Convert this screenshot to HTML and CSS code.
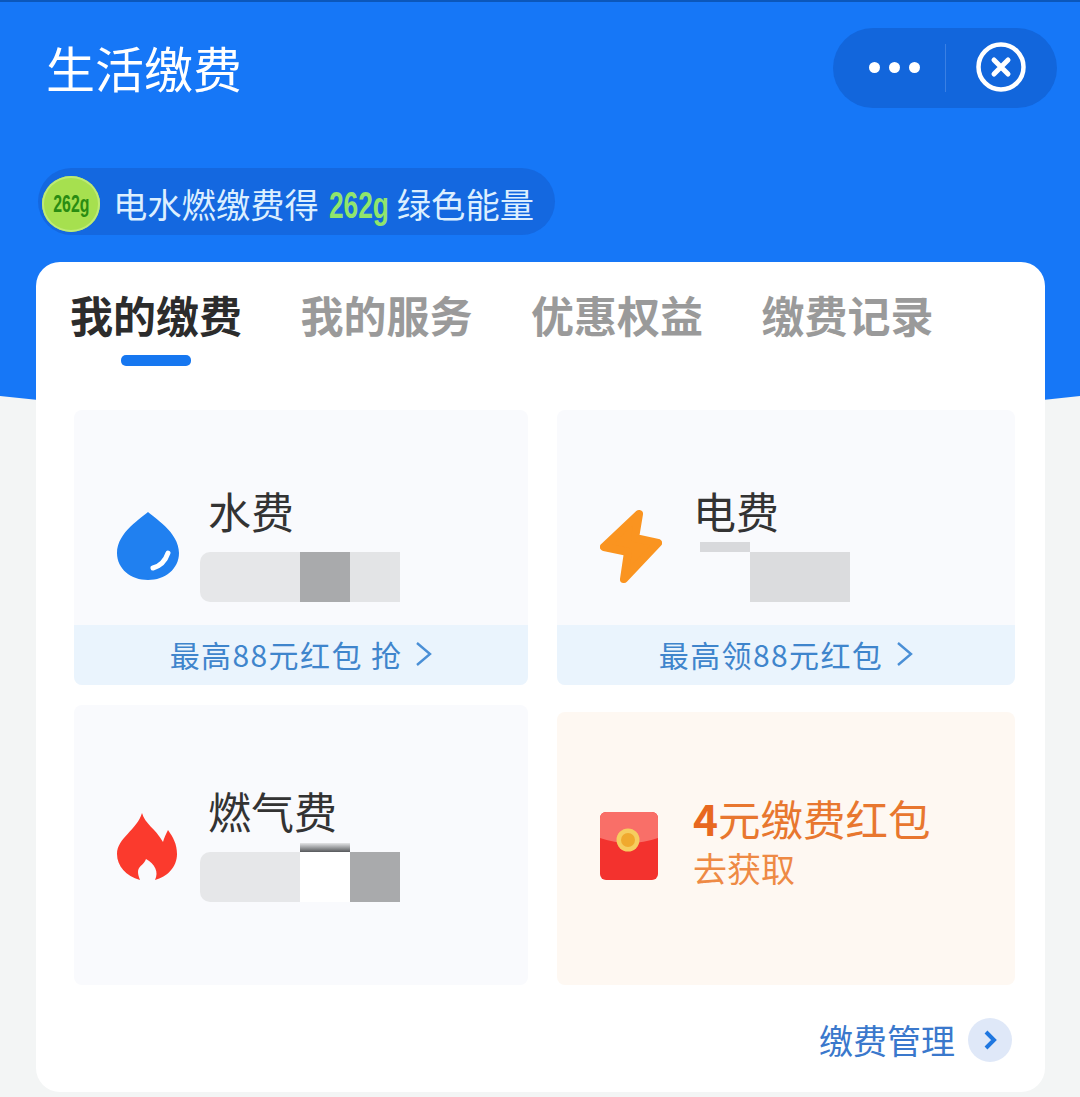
FILE: index.html
```html
<!DOCTYPE html>
<html lang="zh-CN">
	<head>
		<meta charset="UTF-8" />
		<meta name="viewport" content="width=device-width, initial-scale=1.0" />
		<title>生活缴费</title>
		<link rel="stylesheet" href="styles.css">
	</head>
	<body>
		<div class="hero-bg"></div>
		<div class="page">
			<div class="topbar">
				<h1 class="page-title">生活缴费</h1>
				<div class="capsule">
					<div class="capsule-dots"><i></i><i></i><i></i></div>
					<div class="capsule-line"></div>
					<svg class="capsule-close" width="50" height="50" viewBox="0 0 50 50">
						<circle cx="25" cy="25" r="22.5" fill="none" stroke="#fff" stroke-width="4.5" />
						<path d="M18 18L32 32M32 18L18 32" stroke="#fff" stroke-width="5" stroke-linecap="round" />
					</svg>
				</div>
			</div>

			<div class="energy-pill">
				<div class="energy-ball"><span>262g</span></div>
				<p class="energy-text">电水燃缴费得<span class="energy-num">262g</span>绿色能量</p>
			</div>

			<div class="card">
				<div class="tabs">
					<div class="tab tab-active">我的缴费<div class="tab-bar"></div></div>
					<div class="tab">我的服务</div>
					<div class="tab">优惠权益</div>
					<div class="tab">缴费记录</div>
				</div>

				<div class="bills">
					<div class="bill bill-water">
						<div class="bill-main">
							<svg class="bill-icon" width="62" height="68" viewBox="0 0 62 68">
								<path d="M31 0C36 5 62 20 62 41C62 57 48 68 31 68C14 68 0 57 0 41C0 20 26 5 31 0Z" fill="#2080f0" />
								<path d="M36 56Q47 53 51 41" fill="none" stroke="#fff" stroke-width="5" stroke-linecap="round" />
							</svg>
							<div class="bill-info">
								<div class="bill-name">水费</div>
								<div class="mask">
									<div class="cell cell-soft"></div>
									<div class="cell cell-dark"></div>
									<div class="cell cell-light"></div>
								</div>
							</div>
						</div>
						<div class="bill-promo">最高88元红包 抢
							<svg width="17" height="26" viewBox="0 0 17 26"><path d="M2 2L15 13L2 24" fill="none" stroke="#4a8fd6" stroke-width="2.4" /></svg>
						</div>
					</div>

					<div class="bill bill-power">
						<div class="bill-main">
							<svg class="bill-icon" width="62" height="77" viewBox="0 0 62 77">
								<path d="M39 6L4 39L28 44L24 71L58 35L35 30Z" fill="#fa9420" stroke="#fa9420" stroke-width="8" stroke-linejoin="round" />
							</svg>
							<div class="bill-info">
								<div class="bill-name">电费</div>
								<div class="mask mask-power">
									<div class="cell cell-strip"></div>
									<div class="cell cell-grey"></div>
								</div>
							</div>
						</div>
						<div class="bill-promo">最高领88元红包
							<svg width="17" height="26" viewBox="0 0 17 26"><path d="M2 2L15 13L2 24" fill="none" stroke="#4a8fd6" stroke-width="2.4" /></svg>
						</div>
					</div>

					<div class="bill bill-gas">
						<div class="bill-main">
							<svg class="bill-icon" width="60" height="68" viewBox="0 0 60 68">
								<path d="M25 1C28 12 38 16 46 30C47 26 49 22 51 18C56 25 60 32 60 42C60 55 50 65 38 68C42 60 38 52 29 47C27 53 21 54 21 60C21 63 22 65 23 68C9 64 0 54 0 42C0 26 20 18 25 1Z" fill="#fb3a2d" />
							</svg>
							<div class="bill-info">
								<div class="bill-name">燃气费</div>
								<div class="mask">
									<div class="cell cell-soft"></div>
									<div class="cell cell-gap"></div>
									<div class="cell cell-dark"></div>
								</div>
							</div>
						</div>
					</div>

					<div class="bill bill-gift">
						<div class="bill-main">
							<svg class="bill-icon" width="58" height="68" viewBox="0 0 58 68">
								<rect width="58" height="68" rx="6" fill="#f3322e" />
								<path d="M0 6A6 6 0 0 1 6 0H52A6 6 0 0 1 58 6V26Q29 36 0 26Z" fill="#f96f68" />
								<circle cx="28" cy="28" r="11.5" fill="#f6cd5f" />
								<circle cx="28" cy="28" r="7" fill="#f0a92e" />
							</svg>
							<div class="bill-info">
								<div class="gift-name"><b>4</b>元缴费红包</div>
								<div class="gift-sub">去获取</div>
							</div>
						</div>
					</div>
				</div>

				<div class="manage">
					<span>缴费管理</span>
					<div class="manage-btn">
						<svg width="14" height="20" viewBox="0 0 14 20"><path d="M3 2L11 10L3 18" fill="none" stroke="#1f77e0" stroke-width="4" /></svg>
					</div>
				</div>
			</div>
		</div>
	</body>
</html>
```

FILE: styles.css
```css
/* Page and blue backdrop */
body {
	margin: 0;
	padding: 0;
	background-color: #f3f5f5;
	font-family: "Noto Sans CJK SC", "Noto Sans", sans-serif;
	color: #333;
	overflow: hidden;
}
.hero-bg {
	position: absolute;
	top: 0;
	left: 0;
	width: 1080px;
	height: 460px;
	background-color: #1677f7;
	clip-path: path("M0 0H1080V396Q540 456 0 396Z");
}
.page {
	position: relative;
	height: 1097px;
	box-sizing: border-box;
	border-top: 2px solid #0b57ba;
}

/* Title bar */
.topbar {
	display: flex;
	justify-content: space-between;
	align-items: center;
	height: 80px;
	margin-top: 26px;
	padding: 0 23px 0 46px;
}
.page-title {
	margin: 0 0 4px;
	font-size: 49px;
	font-weight: 400;
	color: #fff;
}
.capsule {
	display: flex;
	align-items: center;
	width: 224px;
	height: 80px;
	box-sizing: border-box;
	padding-left: 36px;
	border-radius: 40px;
	background-color: #1266dc;
}
.capsule-dots {
	display: flex;
	gap: 9px;
	margin-bottom: 2px;
}
.capsule-dots i {
	width: 11px;
	height: 11px;
	border-radius: 50%;
	background-color: #fff;
}
.capsule-line {
	width: 1px;
	height: 48px;
	margin: 0 30px 0 25px;
	background-color: #3a80e4;
}
.capsule-close {
	margin-bottom: 2px;
}

/* Green energy pill */
.energy-pill {
	display: flex;
	align-items: center;
	width: 517px;
	height: 67px;
	margin: 60px 0 0 38px;
	box-sizing: border-box;
	padding: 5px 0 0 4px;
	border-radius: 34px;
	background-color: #1468e0;
}
.energy-ball {
	display: flex;
	justify-content: center;
	align-items: center;
	flex: none;
	width: 58px;
	height: 56px;
	border-radius: 50%;
	background-color: #a6e04f;
	box-shadow: inset 0 0 0 2px #bdea76;
}
.energy-ball span {
	font-family: "Liberation Sans", sans-serif;
	font-size: 24px;
	font-weight: 700;
	color: #2a8c12;
	transform: scaleX(0.66);
}
.energy-text {
	margin: 0 0 0 13px;
	font-size: 34.3px;
	line-height: 44px;
	white-space: nowrap;
	color: #dcefff;
}
.energy-num {
	display: inline-block;
	width: 60px;
	margin: 0 8px 0 10px;
	font-family: "Liberation Sans", sans-serif;
	font-size: 36px;
	font-weight: 700;
	color: #90e56c;
	transform: scaleX(0.73);
	transform-origin: left center;
}

/* Main card */
.card {
	width: 1009px;
	height: 830px;
	margin: 27px 0 0 36px;
	box-sizing: border-box;
	padding-top: 22px;
	border-radius: 24px;
	background-color: #fff;
}
.tabs {
	display: flex;
	gap: 58.5px;
	padding-left: 34px;
}
.tab {
	font-size: 43px;
	font-weight: 700;
	line-height: 60px;
	color: #9a9a9a;
}
.tab-active {
	color: #2c2c2c;
}
.tab-bar {
	width: 70px;
	height: 11px;
	margin: 11px auto 0;
	border-radius: 5px;
	background-color: #1677f0;
}

/* Bill grid */
.bills {
	display: grid;
	grid-template-columns: 454px 458px;
	grid-template-rows: 275px 280px;
	gap: 20px 29px;
	margin: 44px 0 0 38px;
}
.bill {
	display: flex;
	flex-direction: column;
	overflow: hidden;
	border-radius: 8px;
	background-color: #f9fafd;
}
.bill-main {
	display: flex;
	flex: 1;
	align-items: flex-start;
	gap: 29px;
	padding: 80px 0 0 43px;
}
.bill-gas .bill-main {
	gap: 31px;
	padding-top: 85px;
}
.bill-power .bill-main {
	gap: 31px;
}
.bill-icon {
	flex: none;
	margin-top: 22px;
}
.bill-power .bill-icon {
	margin-top: 18px;
}
.bill-name {
	margin-top: -3px;
	font-size: 43px;
	line-height: 46px;
	color: #333;
}
.bill-promo {
	display: flex;
	justify-content: center;
	align-items: center;
	gap: 13px;
	height: 60px;
	box-sizing: border-box;
	padding-bottom: 3px;
	font-size: 30px;
	letter-spacing: 1.4px;
	color: #3f85cc;
	background-color: #eaf4fd;
}

/* Blurred-out account numbers */
.mask {
	display: flex;
	height: 60px;
	margin: 9px 0 0 -8px;
}
.mask-power {
	margin-left: 7px;
}
.cell {
	flex: none;
	align-self: flex-end;
	width: 50px;
	height: 50px;
}
.cell-soft {
	width: 100px;
	border-radius: 10px 0 0 10px;
	background-color: #e6e7e9;
}
.cell-dark {
	background-color: #a9aaac;
}
.cell-light {
	background-color: #e3e4e6;
}
.cell-grey {
	width: 100px;
	background-color: #dbdcde;
}
.cell-gap {
	position: relative;
	background-color: #fff;
}
.cell-gap::before {
	content: "";
	position: absolute;
	top: -9px;
	left: 0;
	width: 100%;
	height: 9px;
	background: linear-gradient(#e4e5e7, #55575a);
}
.cell-strip {
	align-self: flex-start;
	height: 10px;
	background-color: #d8d9dc;
}

/* Red packet cell */
.bill-gift {
	margin-top: 7px;
	background-color: #fef8f2;
}
.bill-gift .bill-main {
	gap: 35px;
	padding-top: 83px;
}
.bill-gift .bill-icon {
	margin-top: 17px;
}
.gift-name {
	font-size: 42.5px;
	line-height: 46px;
	color: #e8772f;
}
.gift-name b {
	color: #e8681f;
}
.gift-sub {
	margin-top: 7px;
	font-size: 34px;
	line-height: 40px;
	color: #ee8a45;
}

/* Footer link */
.manage {
	display: flex;
	justify-content: flex-end;
	align-items: center;
	gap: 13px;
	margin-top: 33px;
	padding-right: 33px;
	font-size: 34px;
	line-height: 44px;
	color: #3a78cc;
}
.manage-btn {
	display: flex;
	justify-content: center;
	align-items: center;
	width: 44px;
	height: 44px;
	border-radius: 50%;
	background-color: #dfe8f8;
}
```
